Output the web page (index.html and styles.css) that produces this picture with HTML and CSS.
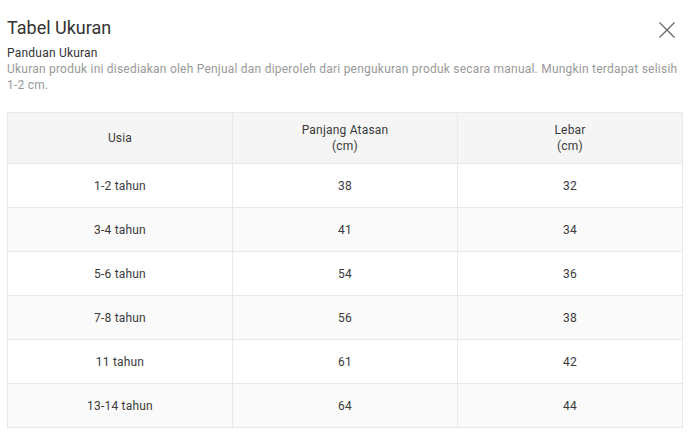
FILE: index.html
```html
<!DOCTYPE html>
<html lang="id">
<head>
<meta charset="utf-8">
<title>Tabel Ukuran</title>
<link rel="stylesheet" href="styles.css">
</head>
<body>
<div class="modal">
  <div class="modal-header">
    <h1 class="title">Tabel Ukuran</h1>
    <button class="close" aria-label="Tutup">
      <svg width="16" height="16" viewBox="0 0 16 16"><path d="M0.5 0.5 L15.5 15.5 M15.5 0.5 L0.5 15.5" stroke="#666" stroke-width="1.3" fill="none"/></svg>
    </button>
  </div>
  <div class="guide">
    <div class="guide-title">Panduan Ukuran</div>
    <p class="guide-desc">Ukuran produk ini disediakan oleh Penjual dan diperoleh dari pengukuran produk secara manual. Mungkin terdapat selisih 1-2 cm.</p>
  </div>
  <table class="size-table">
    <thead>
      <tr><th>Usia</th><th>Panjang Atasan<br>(cm)</th><th>Lebar<br>(cm)</th></tr>
    </thead>
    <tbody>
      <tr><td>1-2 tahun</td><td>38</td><td>32</td></tr>
      <tr><td>3-4 tahun</td><td>41</td><td>34</td></tr>
      <tr><td>5-6 tahun</td><td>54</td><td>36</td></tr>
      <tr><td>7-8 tahun</td><td>56</td><td>38</td></tr>
      <tr><td>11 tahun</td><td>61</td><td>42</td></tr>
      <tr><td>13-14 tahun</td><td>64</td><td>44</td></tr>
    </tbody>
  </table>
</div>
</body>
</html>
```
FILE: styles.css
```css
html, body {
  margin: 0;
  padding: 0;
  background: #fff;
}
body {
  font-family: Roboto, "Liberation Sans", sans-serif;
  color: #333;
}
.modal {
  padding: 16px 13px 0 7px;
}
.modal-header {
  display: flex;
  justify-content: space-between;
  align-items: center;
  height: 24px;
}
.title {
  margin: 0;
  font-size: 18px;
  font-weight: 400;
  line-height: 24px;
  color: #333;
}
.close {
  border: 0;
  background: none;
  padding: 0;
  margin: 3px 8px 0 0;
  width: 16px;
  height: 16px;
  display: flex;
}
.guide {
  margin-top: 5px;
  font-size: 12px;
  line-height: 16px;
  letter-spacing: 0.22px;
}
.guide-title {
  color: #333;
}
.guide-desc {
  margin: 0;
  color: #999;
}
.size-table {
  margin-top: 19px;
  width: 676px;
  border-collapse: collapse;
  table-layout: fixed;
  font-size: 12px;
  line-height: 16px;
  letter-spacing: 0.2px;
}
.size-table th,
.size-table td {
  border: 1px solid #e8e8e8;
  text-align: center;
  font-weight: 400;
  color: #3a3a3a;
}
.size-table th {
  background: #f5f5f5;
  height: 50px;
  padding: 0;
}
.size-table td {
  height: 43px;
  padding: 0;
}
.size-table tbody tr:nth-child(even) td {
  background: #fafafa;
}
```
